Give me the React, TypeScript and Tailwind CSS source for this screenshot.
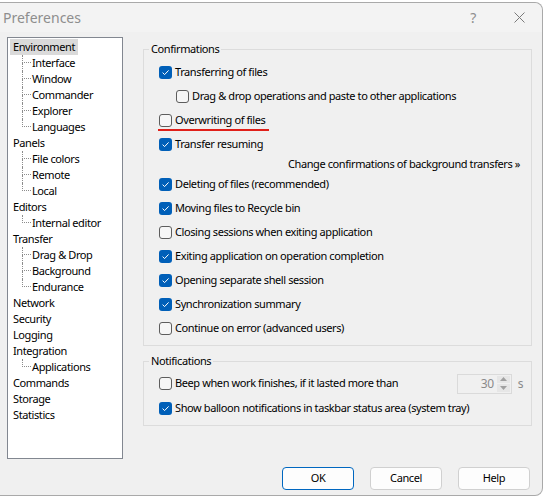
import React from "react"

type Node = { label: string; kids?: string[]; selected?: boolean }

const tree: Node[] = [
  { label: "Environment", selected: true, kids: ["Interface", "Window", "Commander", "Explorer", "Languages"] },
  { label: "Panels", kids: ["File colors", "Remote", "Local"] },
  { label: "Editors", kids: ["Internal editor"] },
  { label: "Transfer", kids: ["Drag & Drop", "Background", "Endurance"] },
  { label: "Network" },
  { label: "Security" },
  { label: "Logging" },
  { label: "Integration", kids: ["Applications"] },
  { label: "Commands" },
  { label: "Storage" },
  { label: "Statistics" },
]

const Box = ({ on }: { on?: boolean }) =>
  on ? (
    <span className="w-[13px] h-[13px] rounded-[3px] bg-[#005fb8] flex items-center justify-center shrink-0">
      <svg width="9" height="9" viewBox="0 0 9 9">
        <path d="M1.6 4.6 L3.6 6.6 L7.6 2.4" stroke="#ffffff" strokeWidth="1" fill="none" />
      </svg>
    </span>
  ) : (
    <span className="w-[13px] h-[13px] rounded-[3px] border border-[#5d5d5d] bg-[#f6f6f6] shrink-0" />
  )

const Row = ({ on, text, indent, mark }: { on?: boolean; text: string; indent?: boolean; mark?: boolean }) => (
  <div className={"h-[24px] flex items-center gap-[3px] " + (indent ? "pl-[32px]" : "pl-[15px]")}>
    <Box on={on} />
    <span className="relative">
      {text}
      {mark && <span className="absolute left-[-17px] right-[-4px] top-[17px] h-[2px] bg-[#e0201a]" />}
    </span>
  </div>
)

const TreeChild = ({ label, last }: { label: string; last: boolean }) => (
  <div className="h-[16px] flex">
    <div className="w-[9px] ml-[12px] flex flex-col shrink-0">
      <div className="h-[8px] border-l border-b border-dotted border-[#8c8c8c]" />
      {!last && <div className="flex-1 border-l border-dotted border-[#8c8c8c]" />}
    </div>
    <span className="leading-[16px] pl-[1px]">{label}</span>
  </div>
)

const Button = ({ label, primary }: { label: string; primary?: boolean }) => (
  <button
    className={
      "w-[72px] h-[23px] rounded-[4px] bg-[#fdfdfd] text-black " +
      (primary ? "border border-[#0067c0]" : "border border-[#d0d0d0]")
    }
  >
    {label}
  </button>
)

export default function App() {
  return (
    <div className="w-[544px] h-[499px] bg-white overflow-hidden text-[11px] tracking-[-0.4px] text-black font-['Noto_Sans',sans-serif]">
      <div className="mt-[2px] w-[543px] h-[494px] bg-[#f0f0f0] border-t border-r border-b border-[#a9a9a9] rounded-tr-[8px] rounded-br-[8px] flex flex-col">
        {/* title bar */}
        <div className="h-[29px] bg-[#f3f3f3] rounded-tr-[8px] flex items-center pl-[3px]">
          <span className="text-[14px] tracking-normal text-[#8e8e8e]">Preferences</span>
          <span className="ml-auto w-[46px] text-center text-[14px] text-[#8e8e8e]">?</span>
          <span className="w-[46px] flex justify-center">
            <svg width="11" height="11" viewBox="0 0 11 11">
              <path d="M0.5 0.5 L10.5 10.5 M10.5 0.5 L0.5 10.5" stroke="#7a7a7a" strokeWidth="1" />
            </svg>
          </span>
        </div>

        <div className="flex pt-[5px] pl-[7px]">
          {/* navigation tree */}
          <div className="w-[116px] h-[422px] bg-white border border-[#828790] pt-[1px] pl-[2px]">
            {tree.map((n) => (
              <div key={n.label}>
                <div className="h-[16px] flex">
                  <span className={"leading-[16px] px-[3px] " + (n.selected ? "bg-[#dadada]" : "")}>{n.label}</span>
                </div>
                {n.kids?.map((k, i) => (
                  <TreeChild key={k} label={k} last={i === n.kids!.length - 1} />
                ))}
              </div>
            ))}
          </div>

          {/* settings */}
          <div className="ml-[20px] w-[389px] pt-[4px]">
            <fieldset className="border border-[#dcdcdc] pb-[5px]">
              <legend className="ml-[5px] px-[2px] leading-[16px]">Confirmations</legend>
              <div className="pt-[3px]">
                <Row on text="Transferring of files" />
                <Row indent text="Drag & drop operations and paste to other applications" />
                <Row text="Overwriting of files" mark />
                <Row on text="Transfer resuming" />
                <div className="h-[16px] flex items-center justify-end pr-[11px]">
                  Change confirmations of background transfers »
                </div>
                <Row on text="Deleting of files (recommended)" />
                <Row on text="Moving files to Recycle bin" />
                <Row text="Closing sessions when exiting application" />
                <Row on text="Exiting application on operation completion" />
                <Row on text="Opening separate shell session" />
                <Row on text="Synchronization summary" />
                <Row text="Continue on error (advanced users)" />
              </div>
            </fieldset>

            <fieldset className="mt-[7px] border border-[#dcdcdc] pb-[5px]">
              <legend className="ml-[5px] px-[2px] leading-[16px]">Notifications</legend>
              <div className="pt-[2px]">
                <div className="h-[25px] flex items-center gap-[3px] pl-[15px] pr-[8px]">
                  <Box />
                  <span>Beep when work finishes, if it lasted more than</span>
                  <div className="ml-auto w-[55px] h-[20px] border border-[#dadada] bg-[#f0f0f0] flex">
                    <span className="flex-1 text-right pr-[3px] leading-[18px] text-[12px] text-[#8a8a8a]">30</span>
                    <div className="w-[14px] flex flex-col gap-[1px] py-[1px] pr-[1px]">
                      <div className="flex-1 bg-[#e6e6e6] flex items-center justify-center">
                        <svg width="7" height="4" viewBox="0 0 7 4">
                          <path d="M0 4 L3.5 0 L7 4 Z" fill="#a0a0a0" />
                        </svg>
                      </div>
                      <div className="flex-1 bg-[#e6e6e6] flex items-center justify-center">
                        <svg width="7" height="4" viewBox="0 0 7 4">
                          <path d="M0 0 L3.5 4 L7 0 Z" fill="#a0a0a0" />
                        </svg>
                      </div>
                    </div>
                  </div>
                  <span className="ml-[3px] text-[12px] text-[#8a8a8a]">s</span>
                </div>
                <Row on text="Show balloon notifications in taskbar status area (system tray)" />
              </div>
            </fieldset>
          </div>
        </div>

        <div className="flex justify-end gap-[16px] pt-[8px] pr-[12px]">
          <Button label="OK" primary />
          <Button label="Cancel" />
          <Button label="Help" />
        </div>
      </div>
    </div>
  )
}
